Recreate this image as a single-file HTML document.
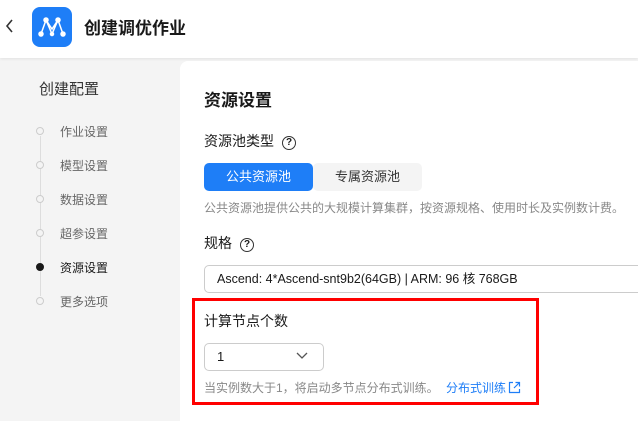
<!DOCTYPE html>
<html><head><meta charset="utf-8"><style>
*{margin:0;padding:0;box-sizing:border-box}
body{width:638px;height:411px;overflow:hidden;background:#f4f4f4;font-family:"Liberation Sans","Noto Sans CJK SC",sans-serif;position:relative;color:#191919}
.a{position:absolute;white-space:nowrap}
.hdr{left:0;top:0;width:638px;height:58px;background:#fff;box-shadow:0 1px 3px rgba(0,0,0,.08)}
.main{left:180px;top:61px;width:470px;height:360px;background:#fff;border-top-left-radius:8px}
.step{left:60px;font-size:12px;color:#666}
.dot{left:36px;width:8px;height:8px;border:1px solid #ccc;border-radius:50%;background:#f4f4f4}
.q{display:inline-block;width:14px;height:14px;border:1.3px solid #333;border-radius:50%;font-size:10px;text-align:center;line-height:12px;margin-left:8px;vertical-align:1px;font-weight:bold}
</style></head><body>
<div class="a hdr"></div>
<svg class="a" style="left:4px;top:18px" width="10" height="16"><path d="M8 2L3 8l5 6" stroke="#333" stroke-width="1.6" fill="none"/></svg>
<div class="a" style="left:32px;top:7px;width:40px;height:40px;background:#1e7ef7;border-radius:8px"></div>
<svg class="a" style="left:32px;top:7px" width="40" height="40"><g stroke="#fff" stroke-width="1.5" fill="#fff"><path d="M9 27L14 13L20 27L26 13L31 27M14 13L20 22L26 13" fill="none"/><circle cx="9" cy="27" r="2"/><circle cx="14" cy="13" r="2"/><circle cx="26" cy="13" r="2"/><circle cx="31" cy="27" r="2"/><circle cx="20" cy="27" r="1.5"/></g></svg>
<div class="a" style="left:84px;top:14px;font-size:17px;font-weight:bold">创建调优作业</div>
<div class="a" style="left:39px;top:78px;font-size:15px;color:#333">创建配置</div>
<div class="a" style="left:40px;top:136px;width:1px;height:160px;background:#ddd"></div>
<div class="a dot" style="top:127px"></div><div class="a step" style="top:123px">作业设置</div>
<div class="a dot" style="top:161px"></div><div class="a step" style="top:157px">模型设置</div>
<div class="a dot" style="top:195px"></div><div class="a step" style="top:191px">数据设置</div>
<div class="a dot" style="top:229px"></div><div class="a step" style="top:225px">超参设置</div>
<div class="a dot" style="top:263px;background:#191919;border-color:#191919"></div><div class="a step" style="top:259px;color:#191919">资源设置</div>
<div class="a dot" style="top:297px"></div><div class="a step" style="top:293px">更多选项</div>
<div class="a main"></div>
<div class="a" style="left:204px;top:86px;font-size:17px;font-weight:bold">资源设置</div>
<div class="a" style="left:204px;top:131px;font-size:14px">资源池类型<span class="q">?</span></div>
<div class="a" style="left:204px;top:163px;width:109px;height:28px;background:#1e7ef7;border-radius:5px;color:#fff;font-size:13px;text-align:center;line-height:28px">公共资源池</div>
<div class="a" style="left:313px;top:163px;width:109px;height:28px;background:#f4f4f4;border-radius:5px;color:#333;font-size:13px;text-align:center;line-height:28px">专属资源池</div>
<div class="a" style="left:204px;top:199px;font-size:12px;color:#888">公共资源池提供公共的大规模计算集群，按资源规格、使用时长及实例数计费。</div>
<div class="a" style="left:204px;top:233px;font-size:14px">规格<span class="q">?</span></div>
<div class="a" style="left:204px;top:265px;width:450px;height:28px;border:1px solid #ccc;border-radius:5px;font-size:12.5px;line-height:26px;padding-left:12px">Ascend: 4*Ascend-snt9b2(64GB) | ARM: 96 核 768GB</div>
<div class="a" style="left:192px;top:298px;width:347px;height:107px;border:3px solid #f00"></div>
<div class="a" style="left:204px;top:311px;font-size:14px">计算节点个数</div>
<div class="a" style="left:204px;top:343px;width:120px;height:28px;border:1px solid #ccc;border-radius:5px;font-size:13px;line-height:26px;padding-left:12px">1</div>
<svg class="a" style="left:296px;top:352px" width="12" height="8"><path d="M1 1l5 5 5-5" stroke="#555" stroke-width="1.3" fill="none"/></svg>
<div class="a" style="left:204px;top:379px;font-size:12px;color:#888">当实例数大于1，将启动多节点分布式训练。 <span style="color:#1e7ef7;margin-left:4px">分布式训练</span></div>
<svg class="a" style="left:508px;top:381px" width="13" height="13"><path d="M5 1.5H1.5v10h10V8M7.5 1.5h4v4M11.5 1.5L6 7" stroke="#1e7ef7" stroke-width="1.2" fill="none"/></svg>
</body></html>
